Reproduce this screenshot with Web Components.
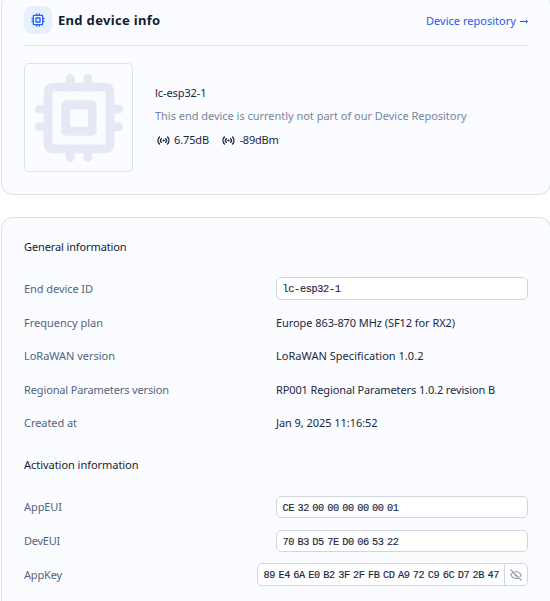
<!DOCTYPE html>
<html lang="en"><head><meta charset="utf-8"><title>End device info</title>
<style>
html{background:#fff;overflow:hidden}
body{margin:0;width:551px;height:601px;overflow:hidden;font:11px/16px "Noto Sans",sans-serif;color:#1a2742}
</style></head><body>
<device-page></device-page>
<script>
const define=(name,html,setup)=>customElements.define(name,class extends HTMLElement{
  connectedCallback(){
    if(this.shadowRoot)return;
    const t=document.createElement('template');t.innerHTML=html;
    this.attachShadow({mode:'open'}).append(t.content.cloneNode(true));
    if(setup)setup(this,this.shadowRoot);
  }
});

// A single line of text whose tracking is adjusted to fill the width in "w".
define('tracked-text','<style>:host{display:inline-block;white-space:pre}span{display:inline-block}</style><span><slot></slot></span>',(el,root)=>{
  const s=root.querySelector('span'),w=+el.getAttribute('w');
  s.style.letterSpacing=(w-s.getBoundingClientRect().width)/el.textContent.length+'px';
});

const icons={
  cpu:'<rect x="5" y="5" width="14" height="14" rx="1"/><path d="M9 9h6v6H9zM3 10h2M3 14h2M10 3v2M14 3v2M21 10h-2M21 14h-2M14 21v-2M10 21v-2"/>',
  signal:'<circle cx="12" cy="12" r="1.5" fill="currentColor" stroke-width="1"/><path stroke-width="2.500" d="M16 8.500a5 5 0 0 1 0 7M8 8.500a5 5 0 0 0 0 7M19.500 5.500a9.500 9.500 0 0 1 0 13M4.500 5.500a9.500 9.500 0 0 0 0 13"/>',
  hidden:'<path d="M10.6 10.6a2 2 0 0 0 2.8 2.8M16.7 16.7A8.7 8.7 0 0 1 12 18q-5.4 0-9-6 1.9-3.2 4.3-4.7M10.2 6.2A9 9 0 0 1 12 6q5.4 0 9 6-1 1.7-2.1 2.9M3 3l18 18"/>'
};
define('ui-icon','<style>:host{display:block;flex:none}svg{display:block;width:100%;height:100%}</style><svg viewBox="0 0 24 24" fill="none" stroke="currentColor" stroke-width="2" stroke-linecap="round" stroke-linejoin="round"></svg>',(el,root)=>{
  root.querySelector('svg').innerHTML=icons[el.getAttribute('name')];
});

define('info-card',`<style>:host{display:block;box-sizing:border-box;width:550px;margin-left:1px;padding:0 22px;border:1px solid #dce2e9;border-radius:12px;background:#fbfcff}</style><slot></slot>`);

define('card-header',`<style>
:host{display:flex;align-items:center;height:52px;border-bottom:1px solid #dfe2e7;box-sizing:border-box}
.tile{display:grid;place-items:center;width:28px;height:28px;border-radius:8px;background:#e6f0ff;color:#2563f5}
ui-icon{width:16px;height:16px}
h1{margin:0 auto 0 6px;font-size:13px;line-height:20px;font-weight:700;color:#111c32}
a{color:#2659ef;text-decoration:none;display:flex;gap:4px;padding-top:2px}
svg{width:8px;height:16px}
</style><div class="tile"><ui-icon name="cpu"></ui-icon></div><h1><tracked-text w="102.500">End device info</tracked-text></h1>
<a href="#"><tracked-text w="90">Device repository</tracked-text><svg viewBox="0 0 8 16" fill="none" stroke="currentColor"><path d="M0 8.500h7.500M6 7l1.500 1.500l-1.500 1.500"/></svg></a>`);

define('device-summary',`<style>
:host{display:flex;gap:22px;padding-top:17px}
.picture{box-sizing:border-box;width:109px;height:109px;display:grid;place-items:center;border:1px solid #dce2e9;border-radius:5px;color:#e7e8f6}
.picture ui-icon{width:106px;height:106px}
.details{padding-top:22px;display:flex;flex-direction:column}
.muted{color:#7785a1;margin-top:7px}
.signals{display:flex;margin-top:8px;gap:11.500px}
.signals div{display:flex;align-items:center;gap:4.500px}
.signals ui-icon{width:13px;height:13px;margin-left:1.500px}
</style><div class="picture"><ui-icon name="cpu"></ui-icon></div>
<div class="details"><tracked-text w="51.500">lc-esp32-1</tracked-text><tracked-text class="muted" w="311.500">This end device is currently not part of our Device Repository</tracked-text>
<div class="signals"><div><ui-icon name="signal"></ui-icon><tracked-text w="35">6.75dB</tracked-text></div><div><ui-icon name="signal"></ui-icon><tracked-text w="39">-89dBm</tracked-text></div></div></div>`);

define('section-title','<style>:host{display:block;color:#111c32}</style><slot></slot>');
define('info-row','<style>:host{display:flex;justify-content:space-between;align-items:center;height:var(--row-height,33.5px)}.label{color:#526481}.value{min-width:252px}</style><div class="label"><slot name="label"></slot></div><div class="value"><slot></slot></div>');
define('code-field',`<style>
:host{display:flex;box-sizing:border-box;height:23px;border:1px solid #d0d6df;border-radius:5px;background:#fff;font:10.300px/22px "Liberation Mono",monospace;overflow:hidden;-webkit-text-stroke:.15px currentColor}
.code{padding-left:5.500px;flex:1;white-space:pre;word-spacing:-2.300px}
button{all:unset;box-sizing:border-box;width:23px;border-left:1px solid #d0d6df;display:grid;place-items:center;color:#96a2b7}
ui-icon{width:14px;height:14px}
</style><div class="code"><slot></slot></div>`,(el,root)=>{
  if(el.hasAttribute('concealable')){
    const b=document.createElement('button');b.setAttribute('aria-label','Hide key');b.innerHTML='<ui-icon name="hidden"></ui-icon>';root.append(b);
  }
});

define('device-page',`<style>
:host{display:block}
.top{height:202px;margin-top:-7px}
.info{height:384px;margin-top:22px;padding-top:21px;border-bottom:0;border-radius:12px 12px 0 0}
.general{padding-top:17.400px}.activation{padding-top:17px;--row-height:33.8px}
.general code-field{margin-bottom:1.500px}
.activation code-field{height:22.500px}
.second{margin-top:17.200px}
.key{width:271px}
</style>
<info-card class="top"><card-header></card-header><device-summary></device-summary></info-card>
<info-card class="info">
<section-title><tracked-text w="102.500">General information</tracked-text></section-title>
<div class="general">
<info-row><tracked-text slot="label" w="69">End device ID</tracked-text><code-field><tracked-text w="58">lc-esp32-1</tracked-text></code-field></info-row>
<info-row><tracked-text slot="label" w="79">Frequency plan</tracked-text><tracked-text w="179">Europe 863-870 MHz (SF12 for RX2)</tracked-text></info-row>
<info-row><tracked-text slot="label" w="91">LoRaWAN version</tracked-text><tracked-text w="147.500">LoRaWAN Specification 1.0.2</tracked-text></info-row>
<info-row><tracked-text slot="label" w="145">Regional Parameters version</tracked-text><tracked-text w="219">RP001 Regional Parameters 1.0.2 revision B</tracked-text></info-row>
<info-row><tracked-text slot="label" w="53">Created at</tracked-text><tracked-text w="101.500">Jan 9, 2025 11:16:52</tracked-text></info-row>
</div>
<section-title class="second"><tracked-text w="114.500">Activation information</tracked-text></section-title>
<div class="activation">
<info-row><tracked-text slot="label" w="38">AppEUI</tracked-text><code-field><tracked-text w="116">CE 32 00 00 00 00 00 01</tracked-text></code-field></info-row>
<info-row><tracked-text slot="label" w="36">DevEUI</tracked-text><code-field><tracked-text w="116">70 B3 D5 7E D0 06 53 22</tracked-text></code-field></info-row>
<info-row><tracked-text slot="label" w="38">AppKey</tracked-text><code-field class="key" concealable><tracked-text w="235.500">89 E4 6A E0 B2 3F 2F FB CD A9 72 C9 6C D7 2B 47</tracked-text></code-field></info-row>
</div></info-card>`);
</script></body></html>
